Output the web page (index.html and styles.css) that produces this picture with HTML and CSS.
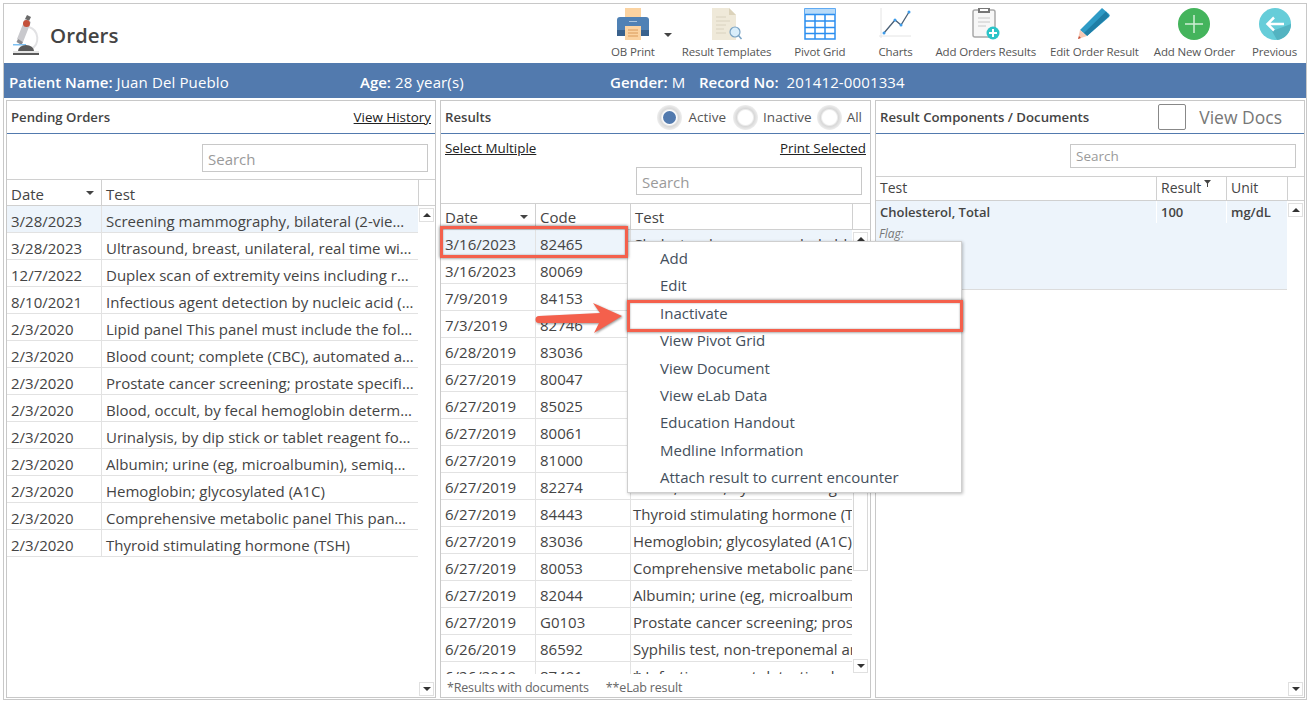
FILE: index.html
```html
<!DOCTYPE html>
<html lang="en">
<head>
<meta charset="utf-8">
<title>Orders</title>
<link rel="stylesheet" href="styles.css">
</head>
<body>
<div class="app">
  <header class="top">
    <div class="brand">
      <svg class="scope" width="30" height="42" viewBox="0 0 30 42">
        <path d="M17 14a12 12 0 0 1 2 22" fill="none" stroke="#e2e2e4" stroke-width="2"/>
        <path d="M15 2l4 2-2 4-4-2z" fill="#6a6a6a"/>
        <path d="M13 6l6 3-8 20-6-3z" fill="#c9c9cd"/>
        <path d="M6 26l5 3-1.500 3-5-3z" fill="#8b8b8f"/>
        <circle cx="14.500" cy="10.500" r="3.500" fill="#c4503a"/>
        <rect x="1" y="31" width="13" height="1.500" fill="#7cc0f2"/>
        <path d="M6 38a8 6 0 0 1 16 0z" fill="#5a5a5a"/>
        <rect x="1" y="38" width="26" height="2" fill="#e6e6e6"/>
        <rect x="1" y="40" width="26" height="3" fill="#5a5a5a"/>
      </svg>
      <h1 class="title">Orders</h1>
    </div>
    <nav class="tools">
      <div class="tool tool-ob">
        <svg width="32" height="32" viewBox="0 0 32 32">
          <rect x="8" y="0" width="16" height="12" fill="#fbd3a1"/>
          <path d="M3 9h26a3 3 0 0 1 3 3v14a2 2 0 0 1-2 2H2a2 2 0 0 1-2-2V12a3 3 0 0 1 3-3z" fill="#4f81b5"/>
          <rect x="0" y="22" width="32" height="6" fill="#39618c"/>
          <rect x="8" y="18" width="16" height="14" fill="#fbd3a1"/>
          <path d="M11 22h10M11 25h10M11 28h10" stroke="#d99a5a" stroke-width="1"/>
          <rect x="12" y="13" width="8" height="1" fill="#a9c4de"/>
        </svg>
        <span class="tool-label">OB Print</span>
        <span class="caret"></span>
      </div>
      <div class="tool tool-rt">
        <svg width="34" height="32" viewBox="0 0 34 32">
          <path d="M2 0h17l7 7v25H2z" fill="#efe9d9"/>
          <path d="M19 0l7 7h-7z" fill="#dcd3bb"/>
          <path d="M6 9h10M6 13h14M6 17h10M6 21h8M6 25h10" stroke="#d9d2bf" stroke-width="1"/>
          <circle cx="25" cy="24" r="5" fill="#d9eefb" stroke="#7aa3c4" stroke-width="1.200"/>
          <path d="M28.500 27.500l3 3.500" stroke="#7aa3c4" stroke-width="1.500"/>
        </svg>
        <span class="tool-label">Result Templates</span>
      </div>
      <div class="tool tool-pg">
        <svg width="32" height="32" viewBox="0 0 32 32">
          <rect x="1" y="1" width="30" height="30" fill="#fff" stroke="#2b8ef0" stroke-width="1.500"/>
          <rect x="1" y="1" width="30" height="5" fill="#b7daf8"/>
          <path d="M1 6.500h30M1 13h30M1 19.500h30M1 25.500h30M11 6.500V31M21 6.500V31" stroke="#2b8ef0" stroke-width="1.500" fill="none"/>
        </svg>
        <span class="tool-label">Pivot Grid</span>
      </div>
      <div class="tool tool-ch">
        <svg width="32" height="32" viewBox="0 0 32 32">
          <path d="M2 0v30M0 28h32" stroke="#e4e4e4" stroke-width="1"/>
          <path d="M5 25l11-13 6 5 8-13" fill="none" stroke="#4a6076" stroke-width="1.300"/>
          <circle cx="5" cy="25" r="1.500" fill="#3d9be9"/>
          <circle cx="16" cy="12" r="1.500" fill="#3d9be9"/>
          <circle cx="22" cy="17" r="1.500" fill="#3d9be9"/>
          <circle cx="30" cy="4" r="1.500" fill="#3d9be9"/>
        </svg>
        <span class="tool-label">Charts</span>
      </div>
      <div class="tool tool-ao">
        <svg width="32" height="32" viewBox="0 0 32 32">
          <rect x="3" y="2" width="22" height="27" rx="2" fill="#f7f7f7" stroke="#a9a9a9" stroke-width="1.500"/>
          <path d="M8 0h12v5H8z" fill="#777"/>
          <rect x="10" y="1" width="8" height="2" fill="#fff"/>
          <path d="M8 10h12M8 14h12M8 18h8" stroke="#c8c8c8" stroke-width="1"/>
          <circle cx="23" cy="25" r="6.500" fill="#2cc4c8"/>
          <path d="M23 21v8M19 25h8" stroke="#fff" stroke-width="2"/>
        </svg>
        <span class="tool-label">Add Orders Results</span>
      </div>
      <div class="tool tool-eo">
        <svg width="34" height="32" viewBox="0 0 34 32">
          <path d="M25 0l7 6a2 2 0 0 1 0 3L10 28 3 22z" fill="#2e9bc6"/>
          <path d="M29 3.500L7 25l3 3L32 8z" fill="#1f7ea6"/>
          <path d="M3 22l7 6-9 3z" fill="#f6c9b5"/>
          <path d="M1 31l1-3 2 2z" fill="#c4503a"/>
        </svg>
        <span class="tool-label">Edit Order Result</span>
      </div>
      <div class="tool tool-an">
        <svg width="32" height="32" viewBox="0 0 32 32">
          <circle cx="16" cy="16" r="16" fill="#44b45c"/>
          <path d="M16 7v18M7 16h18" stroke="#cfeed5" stroke-width="1.500"/>
        </svg>
        <span class="tool-label">Add New Order</span>
      </div>
      <div class="tool tool-pv">
        <svg width="32" height="32" viewBox="0 0 32 32">
          <circle cx="16" cy="16" r="16" fill="#66cdd9"/>
          <path d="M9 16l7 6 16-6a16 16 0 0 1-14 16z" fill="#53b3c1"/>
          <path d="M25 16H9M15 9.500L8.500 16l6.500 6.500" fill="none" stroke="#fff" stroke-width="2.500"/>
        </svg>
        <span class="tool-label">Previous</span>
      </div>
    </nav>
  </header>

  <div class="patient">
    <span class="pf pf-name"><b>Patient Name:</b> Juan Del Pueblo</span>
    <span class="pf pf-age"><b>Age:</b> 28 year(s)</span>
    <span class="pf pf-gender"><b>Gender:</b> M</span>
    <span class="pf"><b>Record No:</b>&nbsp; 201412-0001334</span>
  </div>

  <main class="panels">
    <section class="panel">
      <div class="phead">
        <span class="ptitle">Pending Orders</span>
        <a class="link">View History</a>
      </div>
      <div class="searchrow s1"><div class="search">Search</div></div>
      <div class="grid-wrap">
        <div class="grid-main">
          <div class="row hdr cols1"><div class="cell sortcell">Date<i class="sort"></i></div><div class="cell">Test</div></div>
          <div class="row sel cols1"><div class="cell">3/28/2023</div><div class="cell ell">Screening mammography, bilateral (2-view study of each breast)</div></div>
          <div class="row cols1"><div class="cell">3/28/2023</div><div class="cell ell">Ultrasound, breast, unilateral, real time with image documentation</div></div>
          <div class="row cols1"><div class="cell">12/7/2022</div><div class="cell ell">Duplex scan of extremity veins including responses to compression</div></div>
          <div class="row cols1"><div class="cell">8/10/2021</div><div class="cell ell">Infectious agent detection by nucleic acid (DNA or RNA)</div></div>
          <div class="row cols1"><div class="cell">2/3/2020</div><div class="cell ell">Lipid panel This panel must include the following tests</div></div>
          <div class="row cols1"><div class="cell">2/3/2020</div><div class="cell ell">Blood count; complete (CBC), automated and differential</div></div>
          <div class="row cols1"><div class="cell">2/3/2020</div><div class="cell ell">Prostate cancer screening; prostate specific antigen test</div></div>
          <div class="row cols1"><div class="cell">2/3/2020</div><div class="cell ell">Blood, occult, by fecal hemoglobin determination</div></div>
          <div class="row cols1"><div class="cell">2/3/2020</div><div class="cell ell">Urinalysis, by dip stick or tablet reagent for bilirubin</div></div>
          <div class="row cols1"><div class="cell">2/3/2020</div><div class="cell ell">Albumin; urine (eg, microalbumin), semiquantitative</div></div>
          <div class="row cols1"><div class="cell">2/3/2020</div><div class="cell ell">Hemoglobin; glycosylated (A1C)</div></div>
          <div class="row cols1"><div class="cell">2/3/2020</div><div class="cell ell">Comprehensive metabolic panel This panel must include</div></div>
          <div class="row cols1"><div class="cell">2/3/2020</div><div class="cell ell">Thyroid stimulating hormone (TSH)</div></div>
        </div>
        <div class="sbar"><div class="sb-top"></div><div class="sb-up"></div><div class="sb-fill"></div><div class="sb-down"></div></div>
      </div>
    </section>

    <section class="panel">
      <div class="phead">
        <span class="ptitle">Results</span>
        <div class="radios">
          <span class="radio on"></span><span class="rlabel rfirst">Active</span>
          <span class="radio"></span><span class="rlabel rmid">Inactive</span>
          <span class="radio"></span><span class="rlabel rlast">All</span>
        </div>
      </div>
      <div class="linkrow"><a class="link">Select Multiple</a><a class="link">Print Selected</a></div>
      <div class="searchrow s2"><div class="search">Search</div></div>
      <div class="grid-wrap">
        <div class="grid-main clip">
          <div class="row hdr hdr2 cols2"><div class="cell sortcell">Date<i class="sort"></i></div><div class="cell">Code</div><div class="cell">Test</div></div>
          <div class="row sel cols2"><div class="cell">3/16/2023</div><div class="cell">82465</div><div class="cell nowrap">Cholesterol, serum or whole blood</div></div>
          <div class="row cols2"><div class="cell">3/16/2023</div><div class="cell">80069</div><div class="cell nowrap">Renal function panel</div></div>
          <div class="row cols2"><div class="cell">7/9/2019</div><div class="cell">84153</div><div class="cell nowrap">Prostate specific antigen</div></div>
          <div class="row cols2"><div class="cell">7/3/2019</div><div class="cell">82746</div><div class="cell nowrap">Folic acid; serum</div></div>
          <div class="row cols2"><div class="cell">6/28/2019</div><div class="cell">83036</div><div class="cell nowrap">Hemoglobin; glycosylated</div></div>
          <div class="row cols2"><div class="cell">6/27/2019</div><div class="cell">80047</div><div class="cell nowrap">Basic metabolic panel</div></div>
          <div class="row cols2"><div class="cell">6/27/2019</div><div class="cell">85025</div><div class="cell nowrap">Blood count; complete</div></div>
          <div class="row cols2"><div class="cell">6/27/2019</div><div class="cell">80061</div><div class="cell nowrap">Lipid panel</div></div>
          <div class="row cols2"><div class="cell">6/27/2019</div><div class="cell">81000</div><div class="cell nowrap">Urinalysis</div></div>
          <div class="row cols2"><div class="cell">6/27/2019</div><div class="cell">82274</div><div class="cell nowrap">Blood, occult, by fecal hemoglobin</div></div>
          <div class="row cols2"><div class="cell">6/27/2019</div><div class="cell">84443</div><div class="cell nowrap">Thyroid stimulating hormone (TSH)</div></div>
          <div class="row cols2"><div class="cell">6/27/2019</div><div class="cell">83036</div><div class="cell nowrap">Hemoglobin; glycosylated (A1C)</div></div>
          <div class="row cols2"><div class="cell">6/27/2019</div><div class="cell">80053</div><div class="cell nowrap">Comprehensive metabolic panel</div></div>
          <div class="row cols2"><div class="cell">6/27/2019</div><div class="cell">82044</div><div class="cell nowrap">Albumin; urine (eg, microalbumin)</div></div>
          <div class="row cols2"><div class="cell">6/27/2019</div><div class="cell">G0103</div><div class="cell nowrap">Prostate cancer screening; prostate</div></div>
          <div class="row cols2"><div class="cell">6/26/2019</div><div class="cell">86592</div><div class="cell nowrap">Syphilis test, non-treponemal antibody</div></div>
          <div class="row cols2"><div class="cell">6/26/2019</div><div class="cell">87491</div><div class="cell nowrap">* Infectious agent detection by nucleic</div></div>
        </div>
        <div class="sbar sbar2"><div class="sb-top"></div><div class="sb-up"></div><div class="sb-thumb"></div><div class="sb-fill"></div><div class="sb-down"></div></div>
      </div>
      <div class="pfoot"><span>*Results with documents</span><span>**eLab result</span></div>
    </section>

    <section class="panel">
      <div class="phead">
        <span class="ptitle">Result Components / Documents</span>
        <div class="docs"><span class="checkbox"></span><span class="docs-label">View Docs</span></div>
      </div>
      <div class="searchrow s3"><div class="search">Search</div></div>
      <div class="grid-wrap">
        <div class="grid-main">
          <div class="row hdr hdr3 cols3">
            <div class="cell">Test</div>
            <div class="cell">Result<svg class="funnel" width="7" height="7" viewBox="0 0 7 7"><path d="M0 0h7L4 3.500V7H3V3.500z" fill="#444"/></svg></div>
            <div class="cell">Unit</div>
          </div>
          <div class="detail">
            <div class="row cols3 drow"><div class="cell"><b>Cholesterol, Total</b></div><div class="cell"><b>100</b></div><div class="cell"><b>mg/dL</b></div></div>
            <div class="flag">Flag:</div>
          </div>
        </div>
        <div class="sbar"><div class="sb-top sb-top3"></div><div class="sb-up"></div><div class="sb-fill"></div><div class="sb-down"></div></div>
      </div>
    </section>
  </main>
</div>

<ul class="menu">
  <li>Add</li>
  <li>Edit</li>
  <li>Inactivate</li>
  <li>View Pivot Grid</li>
  <li>View Document</li>
  <li>View eLab Data</li>
  <li>Education Handout</li>
  <li>Medline Information</li>
  <li>Attach result to current encounter</li>
</ul>
<div class="mark mark-row"></div>
<div class="mark mark-item"></div>
<svg class="arrow" width="92" height="36" viewBox="0 0 92 36">
  <path d="M5 16L66 13 59 3 88 16 60 33 65 23 5 23a3.500 3.500 0 0 1 0-7z" fill="#f4604c"/>
</svg>
</body>
</html>
```
FILE: styles.css
```css
* { box-sizing: border-box; }
html, body { margin: 0; padding: 0; }
body {
  width: 1311px;
  height: 703px;
  overflow: hidden;
  position: relative;
  background: #fff;
  font-family: "Open Sans", "Noto Sans", sans-serif;
  font-size: 15px;
  color: #444;
}
.app {
  margin: 3px 0 0 3px;
  width: 1304px;
  height: 697px;
  border: 1px solid #c8c8c8;
  display: flex;
  flex-direction: column;
}
.top {
  height: 59px;
  display: flex;
  justify-content: space-between;
}
.brand { display: flex; align-items: flex-start; padding: 9px 0 0 8px; }
.scope { display: block; }
.title { margin: 8px 0 0 8px; font-size: 20.500px; line-height: 28px; font-weight: 600; color: #444; }
.tools { display: flex; padding-right: 3px; }
.tool {
  position: relative;
  display: flex;
  flex-direction: column;
  align-items: center;
  padding: 4px 6px 0;
}
.tool svg { display: block; height: 32px; }
.tool-label { margin-top: 4px; font-size: 11.500px; line-height: 16px; color: #555; white-space: nowrap; letter-spacing: -0.15px; }
.tool-ob { margin-right: 15px; }
.tool-pg { margin-left: 11px; }
.tool-ch { margin-left: 21px; margin-right: 10px; }
.tool-ao { margin-left: 1px; }
.tool-eo { margin-left: 2px; }
.tool-an { margin-left: 3px; }
.tool-pv { margin-left: 5px; }
.caret {
  position: absolute;
  right: -11px;
  top: 29px;
  border: 4px solid transparent;
  border-top: 4px solid #444;
  border-bottom: 0;
}
.patient {
  height: 35px;
  background: #527aae;
  color: #fff;
  display: flex;
  align-items: center;
  padding: 2px 0 0 5px;
  font-size: 15px;
  white-space: nowrap;
  letter-spacing: 0.13px;
}
.patient b { font-weight: 600; letter-spacing: 0; }
.pf-name { width: 351px; }
.pf-age { width: 250px; }
.pf-gender { width: 89px; }
.panels {
  display: grid;
  grid-template-columns: 430px 431px 430px;
  column-gap: 4px;
  padding: 2px 0 0 2px;
  height: 600px;
}
.panel {
  border: 1px solid #c8c8c8;
  height: 598px;
  display: flex;
  flex-direction: column;
  overflow: hidden;
}
.phead {
  height: 33px;
  flex: none;
  border-bottom: 1px solid #527aae;
  display: flex;
  align-items: center;
  justify-content: space-between;
  padding: 0 4px;
}
.ptitle { font-size: 13.200px; font-weight: 600; color: #444; }
.link { font-size: 13.400px; color: #222; text-decoration: underline; }
.searchrow { display: flex; justify-content: flex-end; flex: none; }
.s1 { padding: 10px 7px 7px 0; height: 45px; }
.s2 { padding: 0 8px 8px 0; height: 36px; }
.s3 { padding: 10px 8px 8px 0; height: 42px; }
.search {
  width: 226px;
  height: 28px;
  border: 1px solid #c8c8c8;
  color: #9a9a9a;
  font-size: 15px;
  line-height: 26px;
  padding: 1px 0 0 5px;
}
.s3 .search { height: 24px; font-size: 13.500px; line-height: 21px; }
.linkrow {
  height: 33px;
  flex: none;
  display: flex;
  justify-content: space-between;
  padding: 5px 4px 0;
}
.grid-wrap { flex: 1; min-height: 0; display: flex; }
.grid-main { flex: 1; min-width: 0; overflow: hidden; }
.row { display: grid; height: 27px; border-bottom: 1px solid #e2e2e2; }
.hdr { border-top: 1px solid #d0d0d0; border-bottom: 1px solid #d0d0d0; height: 27px; }
.hdr .cell { border-right: 1px solid #d0d0d0; }
.hdr2 .cell { padding-top: 0; }
.hdr3 { height: 25px; }
.hdr3 .cell { padding-top: 0; font-size: 14px; line-height: 22px; }
.sel { background: #edf4fb; }
.cols1 { grid-template-columns: 95px 1fr; }
.cols2 { grid-template-columns: 95px 95px 1fr; }
.cols3 { grid-template-columns: 281px 70px 1fr; }
.cell {
  padding: 1px 0 0 4px;
  line-height: 26px;
  border-right: 1px solid #e2e2e2;
  white-space: nowrap;
  overflow: hidden;
  position: relative;
}
.cols1:not(.hdr) .cell { padding-top: 2px; }
.cell:last-child { border-right: 0; }
.hdr .cell:last-child { border-right: 0; }
.ell { text-overflow: ellipsis; padding-right: 4px; }
.nowrap { text-overflow: clip; padding-left: 2px; }
.sortcell { position: relative; }
.sort {
  position: absolute;
  right: 7px;
  top: 11px;
  border: 4px solid transparent;
  border-top: 4px solid #444;
  border-bottom: 0;
}
.sbar { width: 17px; flex: none; display: flex; flex-direction: column; align-items: flex-start; }
.sbar2 { width: 18px; }
.sb-top { height: 27px; width: 100%; border: 1px solid #d0d0d0; border-width: 1px 0 1px 1px; flex: none; }
.sb-top3 { height: 25px; }
.sb-up, .sb-down {
  width: 15px;
  height: 14px;
  flex: none;
  border: 1px solid #e0e0e0;
  position: relative;
  background: #fff;
  margin-left: 1px;
}
.sb-up { margin-top: 2px; }
.sb-down { margin-bottom: 1px; }
.sb-up::after, .sb-down::after {
  content: "";
  position: absolute;
  left: 3px;
  top: 4px;
  border: 4px solid transparent;
}
.sb-up::after { border-bottom: 4px solid #333; border-top: 0; }
.sb-down::after { border-top: 4px solid #333; border-bottom: 0; }
.sb-fill { flex: 1; }
.sb-thumb { width: 15px; height: 325px; flex: none; border: 1px solid #d8d8d8; margin-left: 1px; }
.sbar2 .sb-down { margin-bottom: 1px; }
.pfoot {
  height: 23px;
  flex: none;
  display: flex;
  gap: 17px;
  padding-left: 6px;
  font-size: 12.500px;
  line-height: 27px;
  color: #666;
  letter-spacing: -0.17px;
}
.radios { display: flex; align-items: center; }
.radio {
  width: 25px;
  height: 25px;
  border-radius: 50%;
  background: radial-gradient(circle, #fff 0 7px, #d8d8d8 9px, #eeeeee 12.500px);
  position: relative;
}
.radio.on::after {
  content: "";
  position: absolute;
  left: 6px;
  top: 6px;
  width: 13px;
  height: 13px;
  border-radius: 50%;
  background: #527aae;
}
.rlabel { font-size: 13.500px; color: #555; margin: 0 7px 0 5px; }
.rfirst { margin-left: 7px; }
.rmid { margin-right: 5px; }
.rlast { margin-right: 4px; }
.docs { display: flex; align-items: center; padding-right: 18px; }
.checkbox { width: 28px; height: 26px; border: 1px solid #888; border-radius: 2px; margin-right: 13px; }
.docs-label { font-size: 17.500px; color: #777; }
.detail { background: #edf4fb; height: 89px; border-bottom: 1px solid #dcdcdc; }
.drow { height: 22px; border: 0; }
.drow .cell { padding-top: 0; line-height: 22px; font-size: 13px; border-right: 1px solid #fff; }
.drow .cell:last-child { border-right: 0; }
.drow b { font-weight: 600; }
.flag { font-size: 12px; font-style: italic; color: #777; padding: 2px 0 0 3px; }
.funnel { position: absolute; margin: 3px 0 0 3px; }
.menu {
  position: absolute;
  left: 627px;
  top: 241px;
  width: 335px;
  height: 252px;
  margin: 0;
  padding: 3px 0 0;
  list-style: none;
  background: #fff;
  border: 1px solid #cfcfcf;
  box-shadow: 1px 1px 3px rgba(0, 0, 0, 0.25);
}
.menu li { height: 27.400px; line-height: 27px; padding-left: 32px; font-size: 15px; color: #444f5c; }
.mark {
  position: absolute;
  border: 3px solid #f4604c;
  box-shadow: 0 0 3px rgba(0, 0, 0, 0.6), inset 0 0 2px rgba(0, 0, 0, 0.4);
}
.mark-row { left: 440px; top: 226px; width: 188px; height: 32px; }
.mark-item { left: 627px; top: 300px; width: 336px; height: 32px; }
.arrow {
  position: absolute;
  left: 534px;
  top: 300px;
  filter: drop-shadow(1px 1px 1px rgba(0, 0, 0, 0.4));
}
```
